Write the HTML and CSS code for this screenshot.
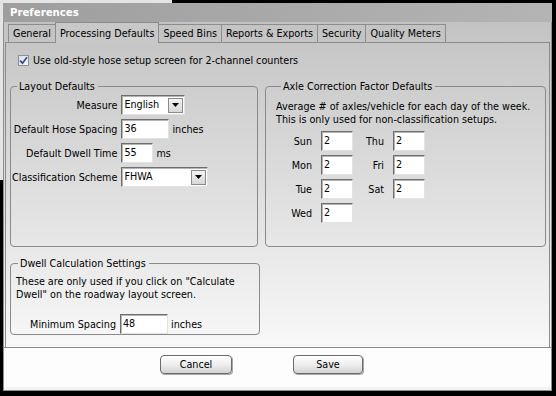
FILE: index.html
```html
<!DOCTYPE html>
<html lang="en">
<head>
    <meta charset="UTF-8">
    <title>Preferences</title>
    <link rel="stylesheet" href="styles.css">
</head>
<body>
    <div class="behind"></div>
    <div class="window">
        <div class="titlebar">Preferences</div>
        <div class="tabctl">
            <div class="tabs">
                <div class="tab">General</div>
                <div class="tab active">Processing Defaults</div>
                <div class="tab">Speed Bins</div>
                <div class="tab">Reports &amp; Exports</div>
                <div class="tab">Security</div>
                <div class="tab">Quality Meters</div>
            </div>
            <div class="page">
                <label class="check">
                    <span class="box"><svg width="9" height="9" viewBox="0 0 9 9"><path d="M1 4.5 L3.5 7.2 L8 1.2" fill="none" stroke="#2b4aa0" stroke-width="1.7"/></svg></span>
                    Use old-style hose setup screen for 2-channel counters
                </label>
                <div class="cols">
                    <fieldset class="group layout">
                        <legend>Layout Defaults</legend>
                        <div class="form">
                            <span class="lbl">Measure</span>
                            <div class="ctl">
                                <div class="select w64"><span>English</span><span class="drop"><svg width="7" height="4"><path d="M0 0h7L3.5 4z"/></svg></span></div>
                            </div>
                            <span class="lbl">Default Hose Spacing</span>
                            <div class="ctl"><div class="field w48">36</div><span>inches</span></div>
                            <span class="lbl">Default Dwell Time</span>
                            <div class="ctl"><div class="field w32">55</div><span>ms</span></div>
                            <span class="lbl">Classification Scheme</span>
                            <div class="ctl">
                                <div class="select w87"><span>FHWA</span><span class="drop"><svg width="7" height="4"><path d="M0 0h7L3.5 4z"/></svg></span></div>
                            </div>
                        </div>
                    </fieldset>
                    <fieldset class="group axle">
                        <legend>Axle Correction Factor Defaults</legend>
                        <p class="note">Average # of axles/vehicle for each day of the week.<br>This is only used for non-classification setups.</p>
                        <div class="days">
                            <span class="lbl">Sun</span><div class="field w32">2</div>
                            <span class="lbl">Thu</span><div class="field w32">2</div>
                            <span class="lbl">Mon</span><div class="field w32">2</div>
                            <span class="lbl">Fri</span><div class="field w32">2</div>
                            <span class="lbl">Tue</span><div class="field w32">2</div>
                            <span class="lbl">Sat</span><div class="field w32">2</div>
                            <span class="lbl">Wed</span><div class="field w32">2</div>
                        </div>
                    </fieldset>
                </div>
                <fieldset class="group dwell">
                    <legend>Dwell Calculation Settings</legend>
                    <p class="note">These are only used if you click on "Calculate<br>Dwell" on the roadway layout screen.</p>
                    <div class="form">
                        <span class="lbl">Minimum Spacing</span>
                        <div class="ctl"><div class="field w48">48</div><span>inches</span></div>
                    </div>
                </fieldset>
            </div>
        </div>
        <div class="buttons">
            <button class="btn">Cancel</button>
            <button class="btn save">Save</button>
        </div>
    </div>
</body>
</html>
```

FILE: styles.css
```css
body {
    margin: 0;
    padding: 3px 0 0 3px;
    background-color: #000;
    font-family: "DejaVu Sans", "Liberation Sans", sans-serif;
    font-stretch: condensed;
    font-size: 10.7px;
    line-height: 13px;
    color: #000;
}
.behind {
    position: absolute;
    left: 0;
    top: 0;
    width: 172px;
    height: 180px;
    background-color: #e4e4e4;
}
.window {
    position: relative;
    width: 547px;
    height: 387px;
    border: 1px solid #8e8e8e;
    border-top: 0;
    background-color: #fdfdfd;
    box-shadow: inset 0 -3px 0 #f4f4f4;
}
.titlebar {
    height: 19px;
    margin: 0 -1px;
    padding-left: 7px;
    background: linear-gradient(to right, #9e9e9e, #b4b4b4);
    color: #fff;
    font-weight: bold;
    font-size: 11.3px;
    line-height: 19px;
}
.tabctl {
    height: 325px;
    background: linear-gradient(#c3c3c3, #f8f8f8);
    border-bottom: 1px solid #8c8c8c;
    display: flex;
    flex-direction: column;
}
.tabs {
    display: flex;
    align-items: flex-end;
    height: 20px;
    padding-left: 4px;
}
.tab {
    height: 17px;
    padding: 0 4px;
    margin-right: -1px;
    border: 1px solid #8c8c8c;
    border-bottom: 0;
    line-height: 17px;
    background-color: #c4c4c4;
}
.tab.active {
    position: relative;
    height: 20px;
    margin-bottom: -1px;
    line-height: 21px;
    background-color: #c8c8c8;
    z-index: 1;
}
.page {
    flex: 1;
    margin: 0 1px;
    padding: 0 3px 0 4px;
    border: 1px solid #8c8c8c;
    border-bottom: 0;
}
.check {
    display: flex;
    align-items: center;
    gap: 4px;
    margin: 11px 0 0 8px;
}
.box {
    width: 11px;
    height: 11px;
    box-sizing: border-box;
    border: 1px solid #8f8f9a;
    background: linear-gradient(135deg, #dcdcdc, #fafafa);
    display: flex;
    align-items: center;
    justify-content: center;
}
.cols {
    display: flex;
    gap: 7px;
    margin-top: 13px;
    height: 167px;
}
.group {
    margin: 0;
    padding: 0 2px;
    border: 1px solid #8a8a8a;
    border-radius: 4px;
    min-width: 0;
}
.group legend {
    padding: 0 3px 0 2px;
    margin-left: 5px;
}
.layout {
    width: 249px;
    box-sizing: border-box;
    padding-left: 1px;
}
.axle {
    width: 282px;
    box-sizing: border-box;
    padding-left: 10px;
}
.dwell {
    width: 250px;
    box-sizing: border-box;
    margin-top: 10px;
    padding-bottom: 0;
}
.form {
    display: grid;
    grid-template-columns: minmax(103px, auto) auto;
    justify-content: start;
    column-gap: 4px;
    row-gap: 4px;
    align-items: center;
    margin-top: 2px;
}
.ctl {
    display: flex;
    align-items: center;
    gap: 3px;
}
.lbl {
    text-align: right;
    white-space: nowrap;
}
.days {
    display: grid;
    grid-template-columns: 36px 32px 22px 32px;
    column-gap: 9px;
    row-gap: 4px;
    align-items: center;
    margin-top: 5px;
}
.days .lbl {
    justify-self: end;
}
.note {
    margin: 7px 0 0;
    white-space: nowrap;
}
.dwell .note {
    margin: 5px 0 0 3px;
}
.dwell .form {
    margin-top: 13px;
}
.field, .select {
    height: 20px;
    box-sizing: border-box;
    padding: 1px 2px;
    background-color: #fff;
    border: 1px solid;
    border-color: #6e6e6e #e2e2e2 #e2e2e2 #6e6e6e;
    box-shadow: inset 1px 1px 0 #b4b4b4;
    line-height: 16px;
}
.select {
    display: flex;
    justify-content: space-between;
    align-items: center;
    padding-right: 1px;
}
.drop {
    width: 15px;
    height: 15px;
    box-sizing: border-box;
    border: 1px solid #8a8a8a;
    background: linear-gradient(#f2f2f2, #d8d8d8);
    display: flex;
    align-items: center;
    justify-content: center;
}
.w32 { width: 32px; }
.w48 { width: 48px; }
.w64 { width: 64px; }
.w87 { width: 87px; }
.buttons {
    display: flex;
    gap: 61px;
    padding: 7px 0 0 156px;
}
.btn {
    width: 72px;
    height: 19px;
    padding: 0;
    border: 1px solid #6c6c6c;
    border-radius: 4px;
    background: linear-gradient(#ffffff, #f0f0f0 45%, #d4d4d4);
    box-shadow: 1px 1px 0 #a8a8a8;
    font: inherit;
    color: #000;
}
.btn.save {
    width: 70px;
}
```
